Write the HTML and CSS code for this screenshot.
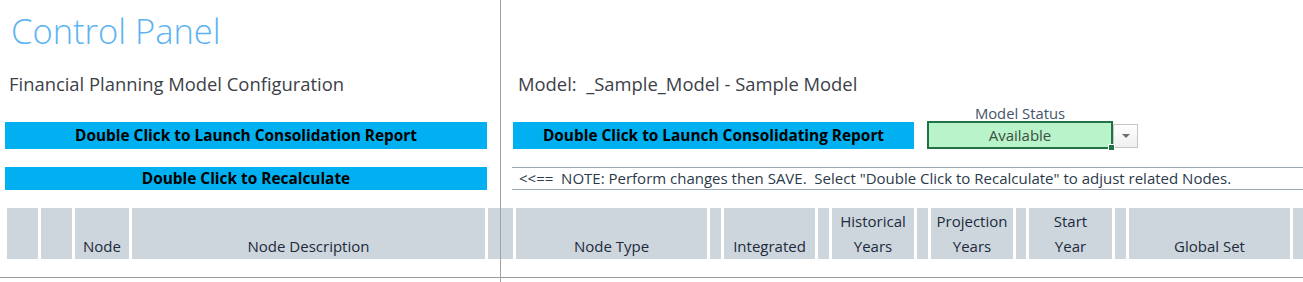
FILE: index.html
```html
<!DOCTYPE html>
<html lang="en">
<head>
  <meta charset="UTF-8">
  <title>Control Panel</title>
  <link rel="stylesheet" href="styles.css">
</head>
<body>
  <div class="sheet">
    <div class="panel">
      <h1 class="title">Control Panel</h1>
      <div></div>

      <p class="caption">Financial Planning Model Configuration</p>
      <p class="caption model">Model:&nbsp; _Sample_Model - Sample Model</p>

      <div class="left-cell">
        <div class="action wide">Double Click to Launch Consolidation Report</div>
      </div>
      <div class="right-cell">
        <div class="action report">Double Click to Launch Consolidating Report</div>
        <div class="status">
          <div class="status-label">Model Status</div>
          <div class="status-row">
            <div class="status-box">Available<span class="handle"></span></div>
            <div class="dropdown"><span class="arrow"></span></div>
          </div>
        </div>
      </div>

      <div class="left-cell">
        <div class="action wide short">Double Click to Recalculate</div>
      </div>
      <div class="right-cell">
        <div class="note">&lt;&lt;==&nbsp; NOTE: Perform changes then SAVE.&nbsp; Select "Double Click to Recalculate" to adjust related Nodes.</div>
      </div>
    </div>

    <!-- Column headers -->
    <div class="headers">
      <div class="col" style="width:31px"></div>
      <div class="col" style="width:31px"></div>
      <div class="col" style="width:54px">Node</div>
      <div class="col" style="width:353px">Node Description</div>
      <div class="col" style="width:25px"></div>
      <div class="col" style="width:191px">Node Type</div>
      <div class="col" style="width:11px"></div>
      <div class="col" style="width:91px">Integrated</div>
      <div class="col" style="width:11px"></div>
      <div class="col" style="width:82px">Historical<br>Years</div>
      <div class="col" style="width:11px"></div>
      <div class="col" style="width:82px">Projection<br>Years</div>
      <div class="col" style="width:10px"></div>
      <div class="col" style="width:83px">Start<br>Year</div>
      <div class="col" style="width:11px"></div>
      <div class="col" style="width:161px">Global Set</div>
      <div class="col" style="width:20px"></div>
    </div>

    <div class="freeze-line"></div>
  </div>
</body>
</html>
```

FILE: styles.css
```css
body {
  margin: 0;
  background-color: #fff;
  font-family: "Open Sans", "Noto Sans", sans-serif;
  overflow: hidden;
}

.sheet {
  position: relative;
  height: 282px;
}

.panel {
  display: grid;
  grid-template-columns: 500px 1fr;
  grid-template-rows: 64px 42px 49px 45px;
}

.title {
  margin: 0;
  padding: 14px 0 0 11px;
  font-size: 34.5px;
  font-weight: 300;
  line-height: 1;
  color: #5cb3f2;
}

.caption {
  margin: 0;
  padding: 9px 0 0 9px;
  font-size: 18.4px;
  line-height: 1.2;
  color: #3c4148;
}

.caption.model {
  padding-left: 18px;
}

.left-cell {
  padding-left: 5px;
}

.right-cell {
  display: flex;
  align-items: flex-end;
  padding-left: 13px;
}

.action {
  background-color: #00b0f0;
  color: #000;
  font-weight: bold;
  font-size: 15.4px;
  text-align: center;
  height: 27px;
  line-height: 27px;
}

.wide {
  width: 482px;
  margin-top: 16px;
}

.wide.short {
  height: 23px;
  line-height: 23px;
  margin-top: 12px;
}

.report {
  width: 401px;
  margin-bottom: 6px;
}

/* Model status dropdown */
.status {
  margin-left: 13px;
  margin-bottom: 6px;
}

.status-label {
  width: 186px;
  text-align: center;
  font-size: 14.8px;
  line-height: 15px;
  color: #44546a;
}

.status-row {
  display: flex;
  align-items: flex-start;
}

.status-box {
  position: relative;
  box-sizing: border-box;
  width: 186px;
  height: 28px;
  border: 2px solid #217346;
  background-color: #b9f3c9;
  text-align: center;
  line-height: 24px;
  font-size: 15px;
  color: #3a5044;
}

.handle {
  position: absolute;
  right: -4px;
  bottom: -4px;
  width: 5px;
  height: 5px;
  background-color: #217346;
  border: 1px solid #fff;
}

.dropdown {
  box-sizing: border-box;
  width: 25px;
  height: 24px;
  margin-top: 3px;
  border: 1px solid #c6c6c6;
  background: linear-gradient(#fff, #efefef);
  display: flex;
  justify-content: center;
  align-items: center;
}

.arrow {
  width: 0;
  height: 0;
  border-left: 4px solid transparent;
  border-right: 4px solid transparent;
  border-top: 4px solid #6d6d6d;
}

.note {
  align-self: flex-start;
  flex: 1;
  box-sizing: border-box;
  height: 23px;
  margin: 12px 0 0 -1px;
  padding-left: 7px;
  border-top: 1px solid #9aa9b5;
  border-bottom: 1px solid #9aa9b5;
  font-size: 15px;
  line-height: 21px;
  color: #2b3a4a;
  white-space: nowrap;
}

/* Column header band */
.headers {
  display: flex;
  gap: 3px;
  margin-top: 8px;
  padding: 0 0 18px 7px;
  border-bottom: 1px solid #9c9c9c;
  overflow: hidden;
}

.col {
  flex: none;
  height: 51px;
  box-sizing: border-box;
  padding-bottom: 0;
  background-color: #cdd6dc;
  display: flex;
  flex-direction: column;
  justify-content: flex-end;
  text-align: center;
  font-size: 15px;
  line-height: 25px;
  color: #1c2a3c;
}

.freeze-line {
  position: absolute;
  top: 0;
  left: 500px;
  width: 1px;
  height: 100%;
  background-color: #a3a3a3;
}
```
